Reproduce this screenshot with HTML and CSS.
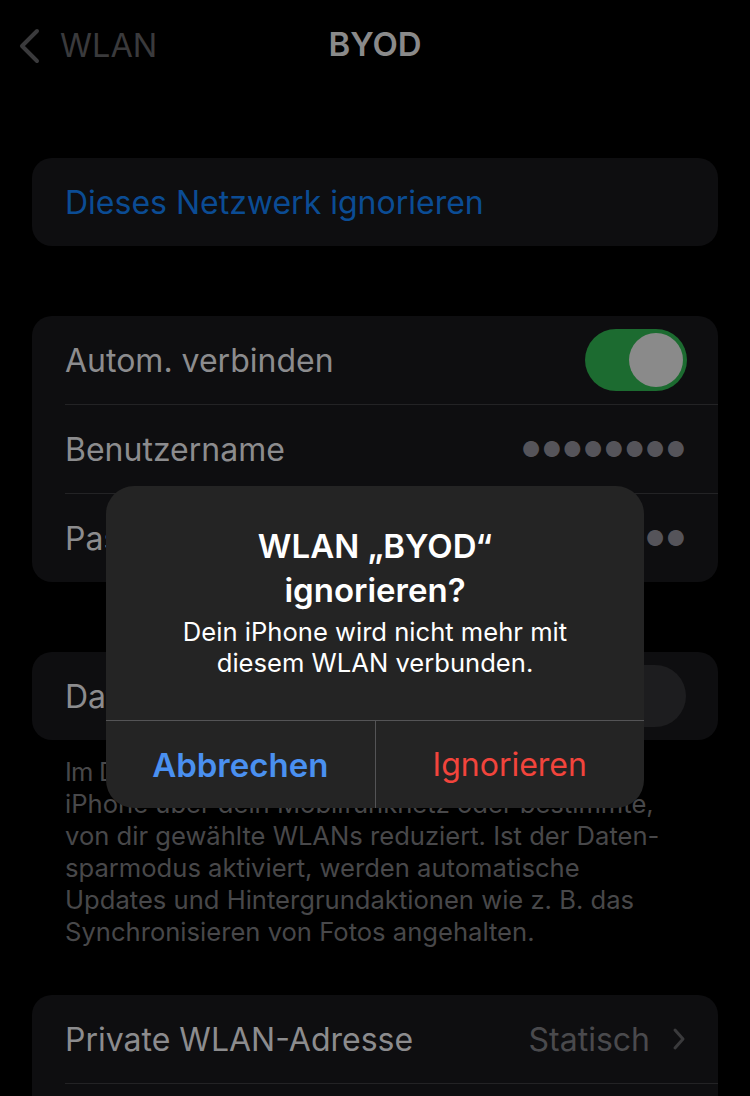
FILE: index.html
```html
<!DOCTYPE html>
<html lang="de">
<head>
    <meta charset="UTF-8">
    <meta name="viewport" content="width=device-width, initial-scale=1.0">
    <title>BYOD</title>
    <link rel="stylesheet" href="styles.css">
</head>
<body>
    <div class="screen">
        <header class="nav">
            <div class="nav-back">
                <svg class="back-chevron" width="22" height="36" viewBox="0 0 22 36">
                    <path d="M19 3 L4 18 L19 33" fill="none" stroke="#3a3a3c" stroke-width="4" stroke-linecap="round" stroke-linejoin="round"/>
                </svg>
                <span>WLAN</span>
            </div>
            <div class="nav-title">BYOD</div>
        </header>

        <section class="card first">
            <div class="row">
                <span class="link">Dieses Netzwerk ignorieren</span>
            </div>
        </section>

        <section class="card">
            <div class="row">
                <span class="label">Autom. verbinden</span>
                <span class="toggle on"><span class="knob"></span></span>
            </div>
            <div class="row">
                <span class="label">Benutzername</span>
                <span class="dots">●●●●●●●●</span>
            </div>
            <div class="row">
                <span class="label">Passwort</span>
                <span class="dots">●●●●●●●●</span>
            </div>
        </section>

        <section class="card">
            <div class="row">
                <span class="label">Datensparmodus</span>
                <span class="toggle off"><span class="knob"></span></span>
            </div>
        </section>
        <p class="note"><span class="tight">Im Datensparmodus wird die Datennutzung deines</span><br>iPhone über dein Mobilfunknetz oder bestimmte,<br>von dir gewählte WLANs reduziert. Ist der Daten-<br>sparmodus aktiviert, werden automatische<br>Updates und Hintergrundaktionen wie z. B. das<br>Synchronisieren von Fotos angehalten.</p>

        <section class="card">
            <div class="row">
                <span class="label">Private WLAN-Adresse</span>
                <span class="detail">Statisch
                    <svg class="chevron" width="14" height="24" viewBox="0 0 14 24">
                        <path d="M3 3 L11 12 L3 21" fill="none" stroke="#3a3a3c" stroke-width="3" stroke-linecap="round" stroke-linejoin="round"/>
                    </svg>
                </span>
            </div>
            <div class="row"></div>
        </section>

        <div class="alert">
            <div class="alert-body">
                <h2>WLAN „BYOD“<br>ignorieren?</h2>
                <p>Dein iPhone wird nicht mehr mit<br>diesem WLAN verbunden.</p>
            </div>
            <div class="alert-actions">
                <button class="cancel">Abbrechen</button>
                <button class="destroy">Ignorieren</button>
            </div>
        </div>
    </div>
</body>
</html>
```

FILE: styles.css
```css
body {
    margin: 0;
    padding: 0;
    background: #000;
    font-family: 'Inter', 'Roboto', sans-serif;
    color: #8c8c8e;
    overflow: hidden;
}
.screen {
    position: relative;
    width: 750px;
    height: 1096px;
    overflow: hidden;
}
.nav {
    position: relative;
    height: 88px;
    display: flex;
    align-items: center;
    justify-content: center;
}
.nav-back {
    position: absolute;
    left: 18px;
    top: 26px;
    display: flex;
    align-items: center;
    gap: 20px;
    color: #3a3a3c;
    font-size: 32.5px;
}
.nav-title {
    color: #8a8a8a;
    font-size: 33px;
    font-weight: 600;
}
.card {
    margin: 0 32px;
    background: #0e0e10;
    border-radius: 20px;
    overflow: hidden;
    margin-top: 70px;
}
.card.first {
    margin-top: 70px;
}
.row {
    height: 88px;
    margin-left: 33px;
    padding-right: 32px;
    display: flex;
    align-items: center;
    justify-content: space-between;
    font-size: 32px;
    border-top: 1px solid #232325;
}
.row:first-child {
    border-top: none;
}
.link {
    color: #0b4c94;
}
.label {
    color: #8c8c8e;
}
.dots {
    color: #55545a;
    font-size: 21px;
    letter-spacing: 1.5px;
    margin-right: -1px;
}
.toggle {
    width: 102px;
    height: 62px;
    border-radius: 31px;
    display: flex;
    align-items: center;
    box-sizing: border-box;
    padding: 0 4px;
}
.toggle.on {
    background: #1c6b30;
    justify-content: flex-end;
    margin-right: -1px;
}
.toggle.off {
    background: #1d1d1f;
    justify-content: flex-start;
}
.knob {
    width: 54px;
    height: 54px;
    border-radius: 50%;
    background: #8a8a8a;
}
.toggle.off .knob {
    background: #2a2a2c;
}
.detail {
    display: flex;
    align-items: center;
    gap: 22px;
    color: #4a4a4d;
}
.note {
    margin: 16px 32px 0 65px;
    font-size: 25.6px;
    line-height: 32px;
    color: #48484a;
}
.note .tight {
    letter-spacing: -0.8px;
}
.note + .card {
    margin-top: 47px;
}
.alert {
    position: absolute;
    left: 106px;
    top: 486px;
    width: 538px;
    background: #242424;
    border-radius: 28px;
    overflow: hidden;
    color: #fff;
    text-align: center;
}
.alert-body {
    padding: 38px 20px 42px;
}
.alert h2 {
    margin: 0;
    font-size: 33px;
    line-height: 44px;
    font-weight: 600;
}
.alert p {
    margin: 4px 0 0;
    font-size: 25.6px;
    line-height: 31px;
}
.alert-actions {
    display: flex;
    border-top: 1px solid #545456;
}
.alert-actions button {
    flex: 1;
    height: 87px;
    background: none;
    border: none;
    font-family: inherit;
    font-size: 32px;
}
.alert-actions .cancel {
    color: #4a90f0;
    font-weight: 600;
    font-size: 33px;
    border-right: 1px solid #545456;
}
.alert-actions .destroy {
    color: #f2443c;
}
```
